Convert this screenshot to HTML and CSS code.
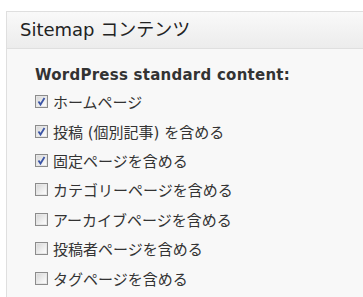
FILE: index.html
```html
<!DOCTYPE html>
<html lang="ja">

<head>
    <meta charset="UTF-8">
    <title>Sitemap</title>
    <link rel="stylesheet" href="styles.css">
</head>

<body>
    <div class="postbox">
        <!-- panel header -->
        <h3 class="hndle">Sitemap コンテンツ</h3>
        <div class="inside">
            <p class="group-title">WordPress standard content:</p>
            <label class="row"><span class="box checked"><svg viewBox="0 0 11 11" width="11" height="11"><path d="M2.5 5.5 L4.5 8.5 L8.5 2" fill="none" stroke="#3b55a6" stroke-width="1.8"/></svg></span>ホームページ</label>
            <label class="row"><span class="box checked"><svg viewBox="0 0 11 11" width="11" height="11"><path d="M2.5 5.5 L4.5 8.5 L8.5 2" fill="none" stroke="#3b55a6" stroke-width="1.8"/></svg></span>投稿 (個別記事) を含める</label>
            <label class="row"><span class="box checked"><svg viewBox="0 0 11 11" width="11" height="11"><path d="M2.5 5.5 L4.5 8.5 L8.5 2" fill="none" stroke="#3b55a6" stroke-width="1.8"/></svg></span>固定ページを含める</label>
            <label class="row"><span class="box"></span>カテゴリーページを含める</label>
            <label class="row"><span class="box"></span>アーカイブページを含める</label>
            <label class="row"><span class="box"></span>投稿者ページを含める</label>
            <label class="row"><span class="box"></span>タグページを含める</label>
        </div>
    </div>
</body>

</html>
```

FILE: styles.css
```css
body {
    margin: 0;
    background-color: #fff;
    font-family: "DejaVu Sans", "Noto Sans CJK JP", sans-serif;
    color: #333;
}

.postbox {
    margin: 11px 0 0 6px;
    width: 357px;
    border: 1px solid #dfdfdf;
    border-right: none;
    background-color: #f8f8f8;
}

.hndle {
    margin: 0;
    height: 36px;
    line-height: 36px;
    padding-left: 13px;
    font-size: 18px;
    font-weight: normal;
    color: #222;
    font-family: "DejaVu Sans", "Noto Sans CJK JP", sans-serif;
    background: linear-gradient(to bottom, #f9f9f9, #ececec);
    border-bottom: 1px solid #dfdfdf;
}

.inside {
    padding: 16px 0 10px 28px;
}

.group-title {
    margin: 0;
    height: 22px;
    line-height: 20px;
    font-size: 15px;
    letter-spacing: 0.25px;
    font-weight: bold;
    color: #333;
}

.row {
    display: flex;
    align-items: center;
    height: 29.4px;
    font-size: 15px;
    font-family: "DejaVu Sans", "Noto Sans CJK JP", sans-serif;
    color: #333;
}

.box {
    box-sizing: border-box;
    width: 13px;
    height: 13px;
    margin-right: 5px;
    border: 1px solid #8c8c8c;
    background: linear-gradient(135deg, #d4d4d4, #f4f4f4 70%, #fff);
    display: flex;
    align-items: center;
    justify-content: center;
    box-shadow: inset 0 0 0 1px #e6e6e6;
}

.box svg {
    display: block;
}
```
